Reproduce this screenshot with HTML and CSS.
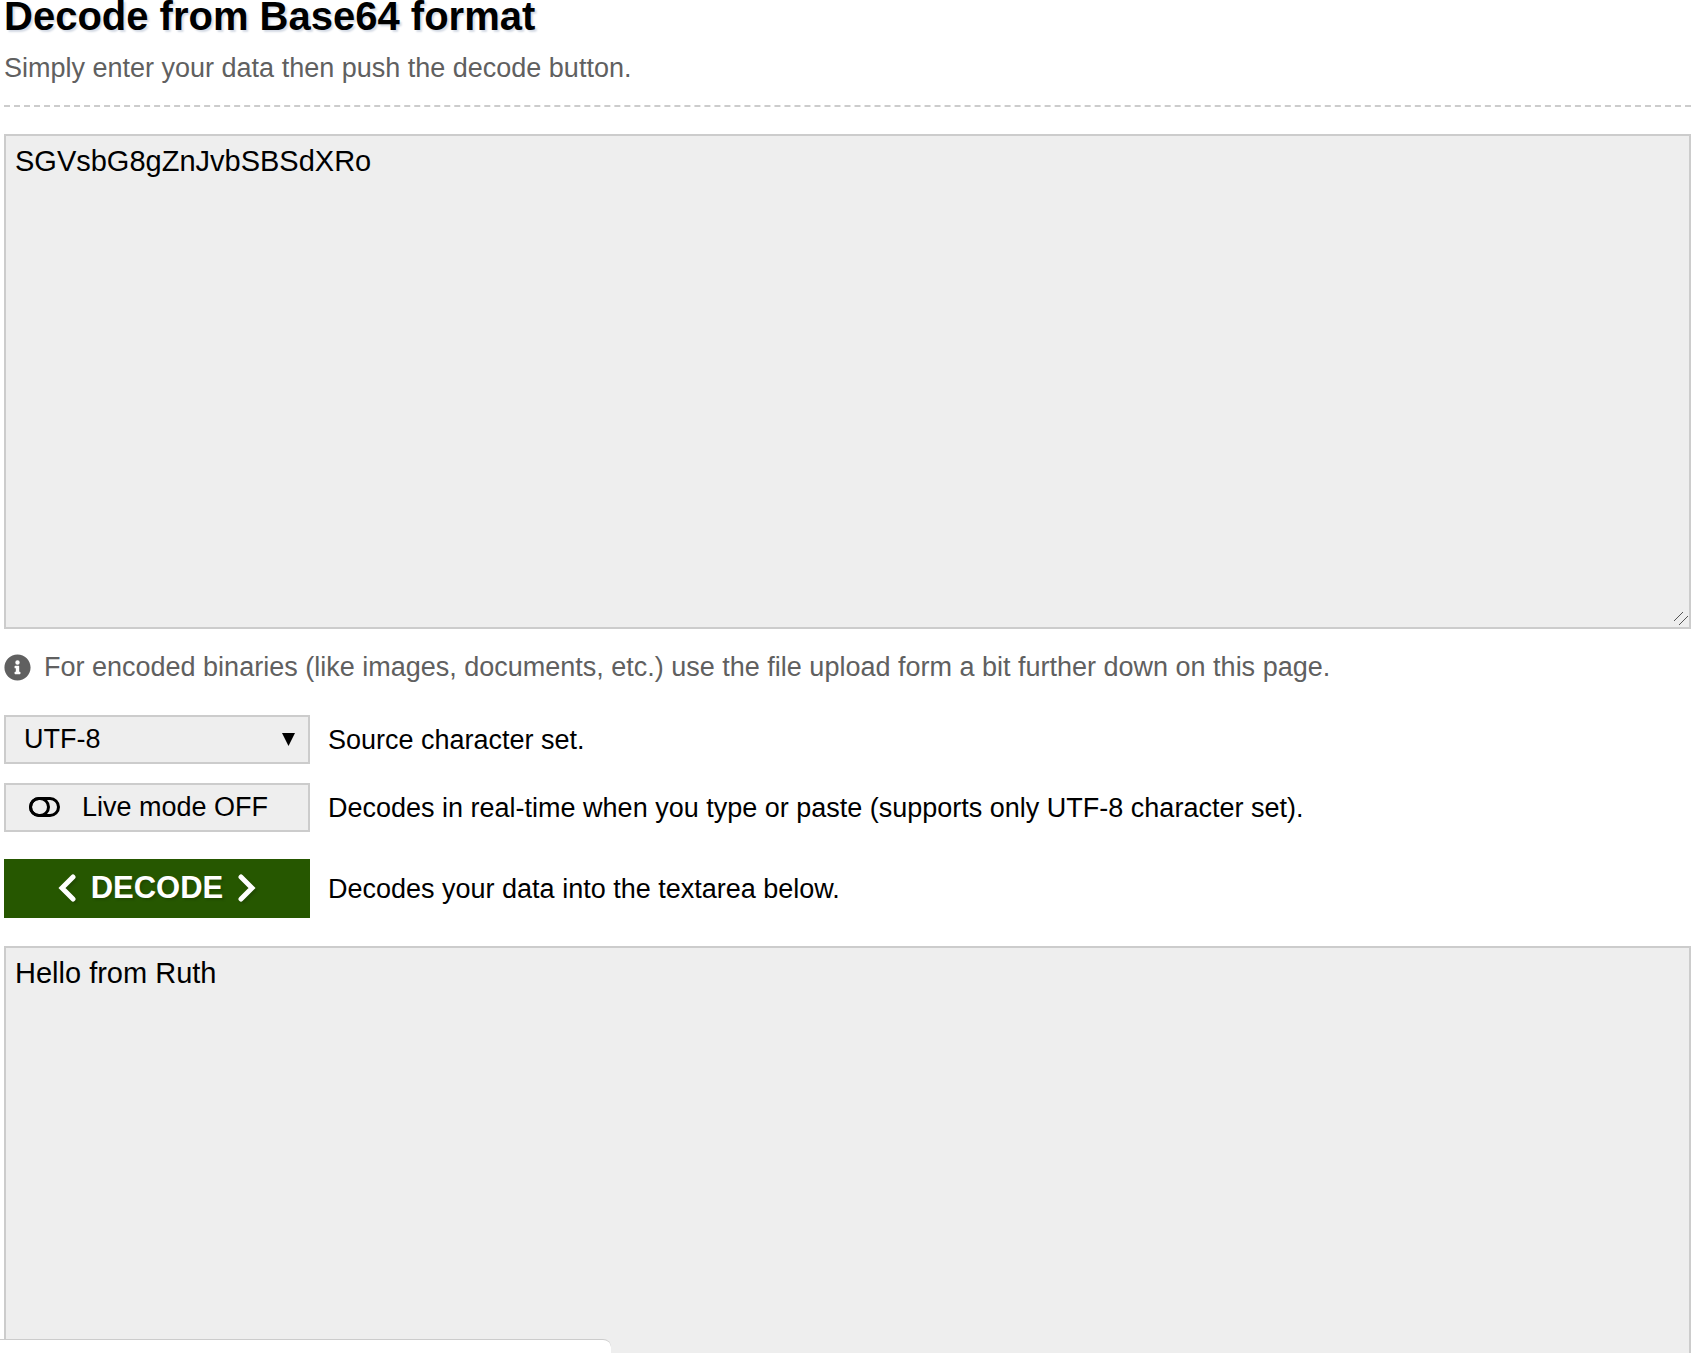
FILE: index.html
```html
<!DOCTYPE html>
<html lang="en">
<head>
<meta charset="utf-8">
<meta name="viewport" content="width=device-width, initial-scale=1">
<title>Base64 Decode</title>
<link rel="stylesheet" href="styles.css">
</head>
<body>
<main class="page">
  <header class="intro">
    <h1 class="title">Decode from Base64 format</h1>
    <p class="subtitle">Simply enter your data then push the decode button.</p>
  </header>
  <form class="decoder">
    <textarea class="field" aria-label="Data to decode" spellcheck="false">SGVsbG8gZnJvbSBSdXRo</textarea>
    <p class="hint">
      <svg class="hint-icon" viewBox="0 0 512 512" aria-hidden="true"><path fill="currentColor" d="M256 8C119 8 8 119 8 256s111 248 248 248 248-111 248-248S393 8 256 8zm0 110a42 42 0 1 1 0 84 42 42 0 0 1 0-84zm56 254a12 12 0 0 1-12 12h-88a12 12 0 0 1-12-12v-24a12 12 0 0 1 12-12h12v-64h-12a12 12 0 0 1-12-12v-24a12 12 0 0 1 12-12h64a12 12 0 0 1 12 12v100h12a12 12 0 0 1 12 12z"/></svg>
      <span>For encoded binaries (like images, documents, etc.) use the file upload form a bit further down on this page.</span>
    </p>
    <div class="option">
      <div class="select">
        <select class="control" id="charset"><option>UTF-8</option><option>ASCII</option></select>
        <svg class="select-arrow" viewBox="0 0 13 13" aria-hidden="true"><path d="M0 0h13L6.500 13z"/></svg>
      </div>
      <label for="charset">Source character set.</label>
    </div>
    <div class="option">
      <button class="control live" type="button" id="live">
        <svg class="live-icon" viewBox="0 0 31 20" fill="none" stroke="currentColor" stroke-width="3" aria-hidden="true"><rect x="1.500" y="1.500" width="28" height="17" rx="8.500"/><rect x="1.500" y="1.500" width="18" height="17" rx="8.500"/></svg>
        <span>Live mode OFF</span>
      </button>
      <label for="live">Decodes in real-time when you type or paste (supports only UTF-8 character set).</label>
    </div>
    <div class="option option-submit">
      <button class="submit" type="button" id="decode">
        <svg class="chevron" viewBox="0 0 18 28" aria-hidden="true"><path d="M15 3 4 14l11 11"/></svg>
        <span>DECODE</span>
        <svg class="chevron" viewBox="0 0 18 28" aria-hidden="true"><path d="m3 3 11 11L3 25"/></svg>
      </button>
      <label for="decode">Decodes your data into the textarea below.</label>
    </div>
    <textarea class="field" aria-label="Decoded data" spellcheck="false">Hello from Ruth</textarea>
  </form>
</main>
<div class="status-bubble"></div>
</body>
</html>
```
FILE: styles.css
```css
* {
  box-sizing: border-box;
}

body {
  height: 100vh;
  margin: 0;
  overflow: hidden;
  background: #fff;
  color: #000;
  font: 27px/32px "Liberation Sans", Arial, sans-serif;
}

button,
select,
textarea {
  margin: 0;
  color: inherit;
  font: inherit;
}

.page {
  padding: 0 15px 0 4px;
}

.intro {
  padding-bottom: 21px;
  border-bottom: 2px dashed #ccc;
}

.title {
  margin: 0;
  font-size: 40px;
  line-height: 32px;
  text-shadow: 2px 2px 2px #d5dbe5;
}

.subtitle {
  margin: 20px 0 0;
  color: #606060;
}

.decoder {
  display: flex;
  flex-direction: column;
  padding-top: 27px;
}

.field {
  flex: none;
  width: 100%;
  height: 495px;
  padding: 9px;
  border: 2px solid #ccc;
  border-radius: 0;
  outline: none;
  background: #eee;
  font-size: 29px;
  line-height: 32px;
  resize: vertical;
}

.field::-webkit-scrollbar {
  width: 22px;
  height: 22px;
}

.field::-webkit-resizer {
  background: url("data:image/svg+xml,%3Csvg xmlns='http://www.w3.org/2000/svg' width='22' height='22'%3E%3Cpath d='M3 20 21 2M12 20l9-9' stroke='%23555' fill='none'/%3E%3C/svg%3E") right bottom no-repeat;
}

.hint {
  display: flex;
  align-items: center;
  gap: 13px;
  margin: 22px 0 32px;
  color: #606060;
}

.hint-icon {
  flex: none;
  width: 27px;
  height: 27px;
}

.option {
  display: flex;
  align-items: center;
  gap: 18px;
  margin-bottom: 19px;
}

.select {
  display: grid;
  flex: none;
  align-items: center;
}

.select > * {
  grid-area: 1 / 1;
}

.select-arrow {
  justify-self: end;
  width: 13px;
  height: 13px;
  margin-right: 15px;
  pointer-events: none;
}

.control {
  flex: none;
  width: 306px;
  height: 49px;
  padding: 0 18px 2px;
  appearance: none;
  border: 2px solid #ccc;
  border-radius: 0;
  background: #eee;
}

.live {
  display: flex;
  align-items: center;
  gap: 22px;
  padding: 0 23px 2px;
}

.live-icon {
  width: 31px;
  height: 20px;
}

.option-submit {
  margin: 8px 0 28px;
}

.submit {
  display: flex;
  flex: none;
  align-items: center;
  justify-content: center;
  gap: 15px;
  width: 306px;
  height: 59px;
  padding: 0 0 2px;
  border: 0;
  background: #265700;
  color: #fff;
  font-size: 31px;
  font-weight: bold;
  text-shadow: 2px 2px 2px #204a00;
}

.chevron {
  width: 18px;
  height: 28px;
  fill: none;
  stroke: currentColor;
  stroke-width: 5;
  stroke-linecap: round;
  filter: drop-shadow(2px 2px 1px #204a00);
}

.status-bubble {
  position: fixed;
  bottom: 0;
  left: 0;
  width: 36%;
  max-width: 611px;
  height: 14px;
  border-top: 1px solid #ccc;
  border-top-right-radius: 8px;
  background: #fff;
}
```
